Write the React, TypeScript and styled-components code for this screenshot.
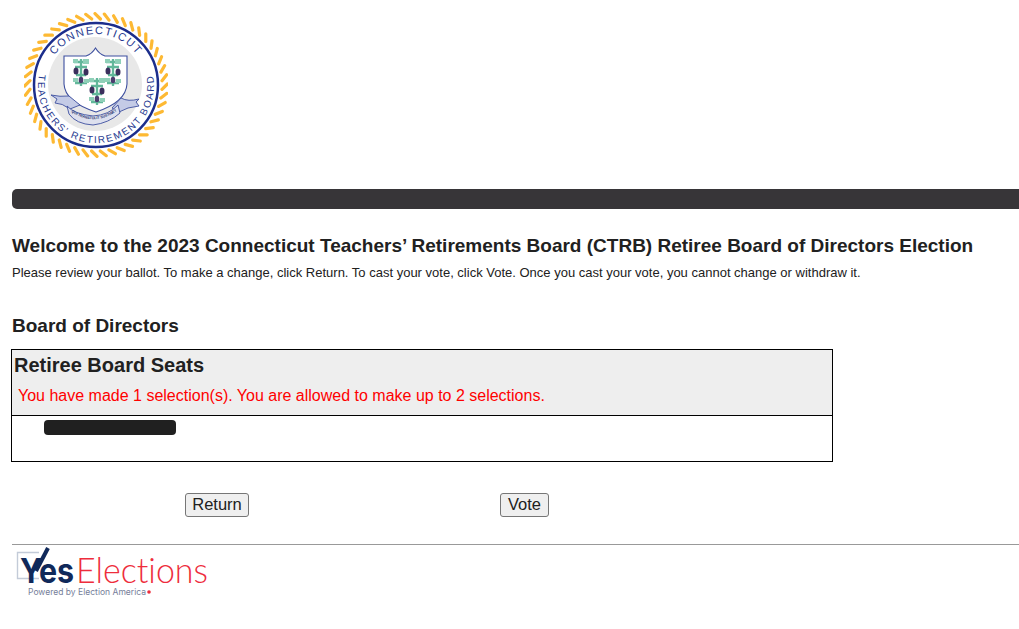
import React from "react"
import styled, { createGlobalStyle } from "styled-components"

const GlobalStyle = createGlobalStyle`
    html, body {
        margin: 0;
        padding: 0;
        background: #fff;
        overflow-x: hidden;
    }
    body {
        font-family: "Liberation Sans", Arial, sans-serif;
        color: #212121;
    }
`

const Page = styled.div`
    padding-left: 12px;
    height: 629px;
    box-sizing: border-box;
`

const LogoWrap = styled.div`
    padding: 12px 0 0 12px;
    height: 146px;
`

const Bar = styled.div`
    margin-top: 31px;
    height: 20px;
    background: #373538;
    border-radius: 5px 0 0 5px;
`

const Title = styled.h1`
    margin: 26px 0 0;
    font-size: 19px;
    line-height: 21px;
    font-weight: 700;
    white-space: nowrap;
`

const Intro = styled.p`
    margin: 9px 0 0;
    font-size: 13px;
    line-height: 15px;
    white-space: nowrap;
`

const SectionTitle = styled.h2`
    margin: 35px 0 0;
    font-size: 19px;
    line-height: 21px;
    font-weight: 700;
`

const BallotBox = styled.div`
    margin: 13px 0 0 -1px;
    width: 822px;
    height: 113px;
    box-sizing: border-box;
    border: 1px solid #000;
`

const BallotHeader = styled.div`
    height: 66px;
    box-sizing: border-box;
    padding: 4px 2px 0;
    background: #eee;
    border-bottom: 1px solid #000;
`

const ContestName = styled.h3`
    margin: 0;
    font-size: 20px;
    line-height: 23px;
    font-weight: 700;
`

const Warning = styled.div`
    margin: 10px 0 0 4px;
    font-size: 16px;
    line-height: 18px;
    color: #f00;
`

const BallotBody = styled.div`
    padding: 4px 0 0 32px;
`

const Redacted = styled.div`
    width: 132px;
    height: 15px;
    border-radius: 4px;
    background: #202020;
`

const Actions = styled.div`
    display: flex;
    gap: 251px;
    margin-top: 31px;
    padding-left: 173px;
`

const ActionButton = styled.button<{ $width: number }>`
    width: ${(props) => props.$width}px;
    height: 24px;
    padding: 0 0 2px;
    box-sizing: border-box;
    font-family: "Liberation Sans", Arial, sans-serif;
    font-size: 16.5px;
    color: #212121;
    background: #efefef;
    border: 1px solid #767676;
    border-radius: 3px;
`

const Rule = styled.div`
    margin-top: 27px;
    height: 1px;
    background: #999;
`

const SealSvg = styled.svg`
    display: block;
`

const FooterLogo = styled.svg`
    display: block;
    font-variant-ligatures: none;
`

const ropeSegments = Array.from({ length: 48 }, (_, i) => (i * 360) / 48)

const Vine = ({ x, y }: { x: number; y: number }) => (
    <g transform={`translate(${x} ${y})`}>
        <path d="M 8 0 V 27 M 1 3 H 15 M 2 8 H 14 M 3 16 H 13 M 2 24 H 14" stroke="#62b79a" strokeWidth="2.3" fill="none" />
        <path d="M 0 0 h 5 v 4 h -5 z M 10 0 h 6 v 5 h -6 z M 0 19 h 5 v 4 h -5 z M 11 20 h 5 v 4 h -5 z" fill="#8fd0b8" />
        <ellipse cx="3" cy="12" rx="2.5" ry="3.6" fill="#3a2f5c" />
        <ellipse cx="13" cy="13" rx="2.5" ry="3.6" fill="#3a2f5c" />
        <ellipse cx="8" cy="21" rx="2.3" ry="3.2" fill="#4b3d6e" />
    </g>
)

const Seal = () => (
    <SealSvg width="144" height="146" viewBox="0 0 144 146" role="img" aria-label="Connecticut Teachers' Retirement Board seal">
        <defs>
            <path id="sealTop" d="M 21 73 A 51 51 0 0 1 123 73" />
            <path id="sealBottom" d="M 15.3 60.9 A 58 58 0 1 0 128.7 60.9" />
            <path id="ribbonArc" d="M 46 99 Q 70 116 94 98" />
        </defs>
        {ropeSegments.map((a) => (
            <line
                key={a}
                x1="71"
                y1="1.6"
                x2="76.4"
                y2="7"
                stroke="#fdb933"
                strokeWidth="3.2"
                strokeLinecap="round"
                transform={`rotate(${a} 72 73)`}
            />
        ))}
        <circle cx="72" cy="73" r="62" fill="#fff" stroke="#1c2e8c" strokeWidth="2.5" />
        <circle cx="71" cy="72" r="47" fill="#e8e8e8" />
        <text fill="#26398f" fontFamily="'Liberation Sans', sans-serif" fontSize="11" letterSpacing="1.5">
            <textPath href="#sealTop" startOffset="50%" textAnchor="middle">CONNECTICUT</textPath>
        </text>
        <text fill="#26398f" fontFamily="'Liberation Sans', sans-serif" fontSize="9.8" letterSpacing="1.7">
            <textPath href="#sealBottom" startOffset="50%" textAnchor="middle">TEACHERS’ RETIREMENT BOARD</textPath>
        </text>
        <path d="M 40 44 H 62 Q 68 42 71.5 36 Q 75 42 81 44 H 103 V 72 Q 102 90 72 100 Q 41 90 40 72 Z" fill="#fff" stroke="#3d4f9f" strokeWidth="1.1" />
        <Vine x={49} y={47} />
        <Vine x={81} y={47} />
        <Vine x={65} y={66} />
        <path d="M 27 83 Q 36 85 45 84 L 56 93 L 46 97 Q 38 91 31 91 L 33 87 Z" fill="#c4cbe6" stroke="#3d4f9f" strokeWidth="0.9" />
        <path d="M 115 87 Q 104 90 97 86 L 88 96 L 95 100 Q 103 95 115 94 L 112 90 Z" fill="#c4cbe6" stroke="#3d4f9f" strokeWidth="0.9" />
        <path d="M 43 94 Q 50 102 69 104 Q 85 103 94 93 L 96 101 Q 85 111 69 113 Q 52 112 45 102 Z" fill="#dde0ee" stroke="#3d4f9f" strokeWidth="0.9" />
        <text fill="#1c2e6c" fontFamily="'Liberation Sans', sans-serif" fontSize="3.6" fontWeight="700">
            <textPath href="#ribbonArc" startOffset="50%" textAnchor="middle">QUI TRANSTULIT SUSTINET</textPath>
        </text>
    </SealSvg>
)

const YesElectionsLogo = () => (
    <FooterLogo width="210" height="60" viewBox="12 545 210 60" role="img" aria-label="YesElections, powered by Election America">
        <path d="M 39 552.5 H 17.5 V 578.5 H 39" fill="none" stroke="#c3cbd8" strokeWidth="1.4" />
        <text x="20" y="583" fill="#10295a" fontFamily="Inter, sans-serif" fontSize="34" fontWeight="700" textLength="54" lengthAdjust="spacingAndGlyphs">Yes</text>
        <path d="M 36 571 L 48 548" stroke="#10295a" strokeWidth="4" fill="none" />
        <text x="76" y="583" fill="#ee2d3c" fontFamily="Lato, sans-serif" fontSize="35" fontWeight="300" textLength="132" lengthAdjust="spacingAndGlyphs">Elections</text>
        <text x="28" y="595" fill="#76809a" fontFamily="Inter, sans-serif" fontSize="8.4" textLength="118" lengthAdjust="spacingAndGlyphs">Powered by Election America</text>
        <circle cx="149" cy="592" r="1.8" fill="#ee2d3c" />
    </FooterLogo>
)

const App = () => {
    return (
        <Page>
            <GlobalStyle />
            <LogoWrap>
                <Seal />
            </LogoWrap>
            <Bar />
            <Title>Welcome to the 2023 Connecticut Teachers’ Retirements Board (CTRB) Retiree Board of Directors Election</Title>
            <Intro>Please review your ballot. To make a change, click Return. To cast your vote, click Vote. Once you cast your vote, you cannot change or withdraw it.</Intro>
            <SectionTitle>Board of Directors</SectionTitle>
            <BallotBox>
                <BallotHeader>
                    <ContestName>Retiree Board Seats</ContestName>
                    <Warning>You have made 1 selection(s). You are allowed to make up to 2 selections.</Warning>
                </BallotHeader>
                <BallotBody>
                    <Redacted />
                </BallotBody>
            </BallotBox>
            <Actions>
                <ActionButton $width={64}>Return</ActionButton>
                <ActionButton $width={49}>Vote</ActionButton>
            </Actions>
            <Rule />
            <YesElectionsLogo />
        </Page>
    )
}

export default App
